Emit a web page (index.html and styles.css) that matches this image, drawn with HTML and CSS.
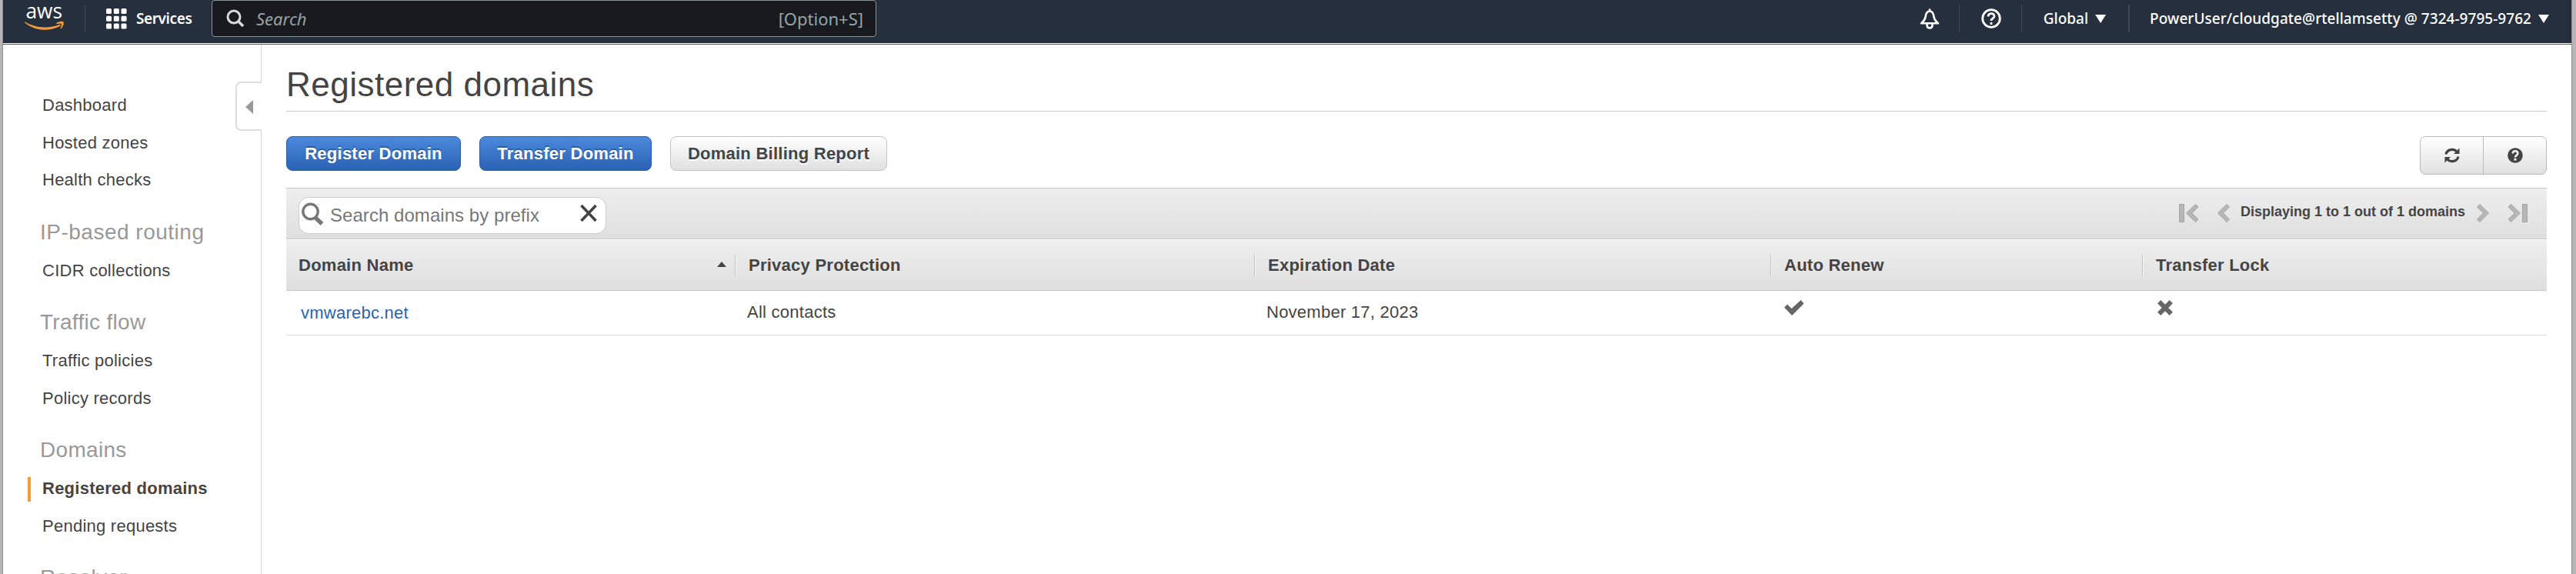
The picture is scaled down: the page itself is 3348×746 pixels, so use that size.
FILE: index.html
```html
<!DOCTYPE html>
<html lang="en">
<head>
<meta charset="utf-8">
<title>Registered domains</title>
<link rel="stylesheet" href="styles.css">
</head>
<body>
<div class="window">
  <header class="topbar">
    <svg class="logo" width="52" height="40" viewBox="0 -6 52 40" fill="#f29b38">
      <text class="logo-text" x="1.500" y="18" textLength="47.500" lengthAdjust="spacingAndGlyphs">aws</text>
      <path d="M.5 22.300C13 30.500 31 31.500 45.500 26C46.500 26 47 27 46 28C32 35.500 13 34.500 0 23.300Z"/>
      <path d="M40.500 24.500C44 21.300 49 21.300 50.500 22.600C51.500 25 49.500 30 46.600 32C46 31.500 48.500 27 47.800 25C46 24.300 42 25.500 40.500 24.500Z"/>
    </svg>
    <i class="sep sep-logo"></i>
    <button class="services">
      <svg width="27" height="27" viewBox="0 0 27 27" fill="#fff"><g id="r"><rect width="7" height="7" rx="1.500"/><rect x="9.800" width="7" height="7" rx="1.500"/><rect x="19.500" width="7" height="7" rx="1.500"/></g><use href="#r" y="9.800"/><use href="#r" y="19.500"/></svg>
      <span>Services</span>
    </button>
    <div class="search">
      <svg width="24" height="24" viewBox="0 0 24 24" fill="none" stroke="#d5dbdb" stroke-width="3"><circle cx="10" cy="10" r="8"/><path d="M15.500 15.500L22 22" stroke-width="3.600"/></svg>
      <span class="search-hint">Search</span>
      <span class="search-key">[Option+S]</span>
    </div>
    <nav class="tools">
      <svg class="bell" width="26" height="28" viewBox="0 0 26 28" fill="none" stroke="#fff" stroke-width="2.600" stroke-linejoin="round"><path d="M13 .5V4M13 3.500C9 3.500 8 7 7.500 11C7 15 5 16.500 2 19.300H24C21 16.500 19 15 18.500 11C18 7 17 3.500 13 3.500Z"/><path d="M9.500 20V22C9.500 26.500 16.500 26.500 16.500 22V20"/></svg>
      <i class="sep"></i>
      <svg class="help" width="26" height="26" viewBox="0 0 26 26" fill="none" stroke="#fff" stroke-width="2.800"><circle cx="13" cy="13" r="11.300"/><path d="M9 10.500C9 5.300 17 5.300 17 10C17 13 13 12.500 13 16"/><path d="M13 18V21"/></svg>
      <i class="sep"></i>
      <span class="region">Global</span><i class="caret"></i>
      <i class="sep sep-bold"></i>
      <span class="account">PowerUser/cloudgate@rtellamsetty @ 7324-9795-9762</span><i class="caret"></i>
    </nav>
  </header>

  <div class="body">
    <aside class="sidebar">
      <a>Dashboard</a>
      <a>Hosted zones</a>
      <a>Health checks</a>
      <h2 class="wide">IP-based routing</h2>
      <a>CIDR collections</a>
      <h2>Traffic flow</h2>
      <a>Traffic policies</a>
      <a>Policy records</a>
      <h2>Domains</h2>
      <a class="active">Registered domains</a>
      <a>Pending requests</a>
      <h2>Resolver</h2>
      <div class="handle"><i></i></div>
    </aside>

    <main class="main">
      <h1>Registered domains</h1>
      <div class="actions">
        <button class="btn primary b1">Register Domain</button>
        <button class="btn primary b2">Transfer Domain</button>
        <button class="btn b3">Domain Billing Report</button>
        <div class="group">
          <button><svg width="20" height="20" viewBox="0 0 20 20" fill="none" stroke="#444" stroke-width="3.200"><path d="M2 8.500A8 7.500 0 0 1 16 5"/><path d="M18 11.500A8 7.500 0 0 1 4 15"/><path d="M19.500 .5V8H12ZM.5 19.500V12H8Z" fill="#444" stroke="none"/></svg></button>
          <button><svg width="20" height="20" viewBox="0 0 20 20"><circle cx="10" cy="10" r="9.800" fill="#444"/><path d="M6.800 7.500C7 3 13.300 3.500 13.300 7.300C13.300 10 10 9.800 10 12.500" fill="none" stroke="#f2f2f2" stroke-width="2.600"/><path d="M8.500 13.800H11.500V16.600H8.500Z" fill="#f2f2f2"/></svg></button>
        </div>
      </div>
      <section class="table">
        <div class="toolbar">
          <div class="filter">
            <svg width="29" height="30" viewBox="0 0 29 30" fill="none" stroke="#777"><circle cx="11.500" cy="12" r="9.700" stroke-width="3.400"/><path d="M18 20L26.500 28" stroke-width="5.200"/></svg>
            <span>Search domains by prefix</span>
            <svg class="clear" width="22" height="22" viewBox="0 0 22 22" stroke="#444" stroke-width="3.600"><path d="M1.500 1L20.500 21M20.500 1L1.500 21"/></svg>
          </div>
          <div class="pager">
            <svg width="26" height="24" viewBox="0 0 26 24"><path d="M.5 .5H6.500V23.500H.5Z"/><path d="M21.500 .5L25 4L17 12L25 20L21.500 23.500L9.500 12Z"/></svg>
            <svg class="prev" width="16" height="24" viewBox="0 0 16 24"><path d="M12 .5L15.500 4L7.500 12L15.500 20L12 23.500L.5 12Z"/></svg>
            <span>Displaying 1 to 1 out of 1 domains</span>
            <svg class="next" width="16" height="24" viewBox="0 0 16 24"><path d="M4 .5L.5 4L8.500 12L.5 20L4 23.500L15.500 12Z"/></svg>
            <svg width="26" height="24" viewBox="0 0 26 24"><path d="M25.500 .5H19.500V23.500H25.500Z"/><path d="M4.500 .5L1 4L9 12L1 20L4.500 23.500L16.500 12Z"/></svg>
          </div>
        </div>
        <div class="grid head">
          <div class="sorted"><span>Domain Name</span><i class="up"></i></div>
          <div>Privacy Protection</div>
          <div>Expiration Date</div>
          <div>Auto Renew</div>
          <div>Transfer Lock</div>
        </div>
        <div class="grid row">
          <div><a>vmwarebc.net</a></div>
          <div>All contacts</div>
          <div>November 17, 2023</div>
          <div><svg class="check" width="26" height="20" viewBox="0 0 26 20"><path d="M0 9.500L4 5.500L9.500 11L21.500 0L25.500 4.500L10 20Z" fill="#666"/></svg></div>
          <div><svg class="cross" width="20" height="20" viewBox="0 0 20 20"><path d="M2.200 2.200L17.800 17.800M17.800 2.200L2.200 17.800" stroke="#666" stroke-width="6"/></svg></div>
        </div>
      </section>
    </main>
  </div>
</div>
</body>
</html>
```
FILE: styles.css
```css
* { box-sizing: border-box; }
body {
  margin: 0;
  height: 746px;
  overflow: hidden;
  background: #b7b4b8;
  color: #444;
  font-family: "Liberation Sans", Arial, sans-serif;
  font-size: 22px;
  letter-spacing: 0.25px;
}
button { font: inherit; letter-spacing: inherit; border: 0; margin: 0; padding: 0; background: none; color: inherit; }
svg { display: block; flex: none; }
h1, h2 { margin: 0; font-weight: 400; }

.window {
  width: 3340px;
  height: 746px;
  margin-left: 3px;
  border-left: 1px solid #8e8b8f;
  border-right: 1px solid #8e8e8e;
  background: #fff;
  overflow: hidden;
}

/* Top bar */
.topbar {
  display: flex;
  align-items: flex-start;
  height: 56px;
  background: #262f3e;
  color: #fff;
  font-family: "Noto Sans", sans-serif;
  letter-spacing: 0;
  white-space: nowrap;
}
.logo { margin-left: 28px; }
.logo-text { fill: #fff; font-size: 28px; font-weight: 500; font-family: "Open Sans", sans-serif; }
.sep { width: 1px; height: 36px; margin-top: 6px; background: #414954; flex: none; }
.sep-bold { width: 2px; }
.sep-logo { margin-left: 26px; }
.services { display: flex; margin: 11px 0 0 27px; gap: 12px; font-weight: 600; }
.services span { width: 72px; line-height: 27px; font-size: 19px; letter-spacing: -0.4px; }
.search {
  display: flex;
  align-items: center;
  width: 864px;
  height: 48px;
  margin-left: 26px;
  padding: 0 16px 0 18px;
  background: #191a1f;
  border: 1px solid #879596;
  border-radius: 4px;
  color: #95a5a6;
  font-size: 22px;
}
.search-hint { margin-left: 15px; font-style: italic; }
.search-key { margin-left: auto; }
.tools { display: flex; margin-left: auto; font-size: 19px; font-weight: 500; line-height: 48px; }
.bell { margin: 11px 25px 0 0; }
.help { margin: 11px 26px 0 28px; }
.region { margin-left: 28px; }
.caret {
  width: 14px;
  height: 11px;
  margin: 19px 29px 0 9px;
  background: #fff;
  clip-path: polygon(0 0, 100% 0, 50% 100%);
}
.account { margin-left: 26px; letter-spacing: 0.04px; }

/* Page body */
.body {
  display: grid;
  grid-template-columns: 336px 1fr;
  height: 689px;
  margin-top: 1px;
  border-top: 1px solid #555a64;
}
.sidebar { position: relative; border-right: 1px solid #d5d5d5; padding-top: 55px; }
.sidebar a { display: block; height: 48.6px; line-height: 48.6px; padding-left: 51px; white-space: nowrap; }
.sidebar h2 {
  height: 68.8px;
  padding: 27px 0 0 48px;
  font-size: 28px;
  line-height: 32px;
  letter-spacing: 0.3px;
  color: #999;
  white-space: nowrap;
}
.sidebar .wide { letter-spacing: 0.5px; }
.sidebar .active { font-weight: 700; }
.active::before {
  content: "";
  float: left;
  width: 4px;
  height: 32px;
  margin: 9px 0 0 -19px;
  background: #f09c3b;
}
.handle {
  position: absolute;
  top: 48px;
  right: -1px;
  width: 34px;
  height: 64px;
  padding: 22px 0 0 11px;
  background: #fff;
  border: 2px solid #ddd;
  border-right: 0;
  border-radius: 7px 0 0 7px;
}
.handle i { display: block; width: 10px; height: 18px; background: #999; clip-path: polygon(0 50%, 100% 0, 100% 100%); }

.main { padding: 0 32px; }
h1 {
  height: 87px;
  padding-top: 27px;
  font-size: 44px;
  line-height: 50px;
  letter-spacing: 0.5px;
  border-bottom: 1px solid #ccc;
}
.actions { display: flex; gap: 24px; align-items: flex-start; height: 99px; padding-top: 32px; }
.btn {
  height: 45px;
  border: 1px solid #c4c4c4;
  border-radius: 8px;
  background: linear-gradient(#fff, #e0e0e0);
  font-weight: 700;
  text-shadow: 0 2px 0 #fff;
  white-space: nowrap;
}
.primary { color: #fff; border-color: #2a5ca8; background: linear-gradient(#4b89dc, #2a62b4); text-shadow: 0 -2px 0 #2a5ca0; }
.b1 { width: 227px; }
.b2 { width: 224px; }
.b3 { width: 282px; }
.group {
  display: grid;
  grid-template-columns: 81px 1fr;
  width: 165px;
  height: 50px;
  margin-left: auto;
  border: 1px solid #bbb;
  border-radius: 7px;
  background: linear-gradient(#fff, #e0e0e0);
}
.group button { display: grid; place-items: center; }
.group button + button { border-left: 1px solid #bbb; }

.toolbar {
  display: flex;
  justify-content: space-between;
  height: 67px;
  padding: 11px 25px 0 16px;
  border-top: 1px solid #c6c6c6;
  border-bottom: 1px solid #c6c6c6;
  background: linear-gradient(#eee, #dfdfdf);
}
.filter {
  display: flex;
  width: 400px;
  height: 48px;
  padding: 6px 11px 0 3px;
  border: 1px solid #ccc;
  border-radius: 13px;
  background: #fff;
  color: #777;
  font-size: 24px;
  line-height: 34px;
  letter-spacing: 0.05px;
}
.filter span { margin-left: 8px; white-space: nowrap; }
.clear { margin: 3px 0 0 auto; }
.pager { display: flex; padding-top: 9px; font-size: 18px; font-weight: 700; line-height: 21px; letter-spacing: 0; white-space: nowrap; }
.pager path { fill: #b6b6b6; stroke: #a6a6a6; }
.prev { margin: 0 14px 0 24px; }
.next { margin: 0 24px 0 15px; }

.grid { display: grid; grid-template-columns: 583px 675px 671px 483px 526px; }
.head {
  height: 67px;
  padding-top: 19px;
  border-top: 1px solid #fff;
  border-bottom: 1px solid #c6c6c6;
  background: linear-gradient(#eee, #dfdfdf);
  font-weight: 700;
}
.head div { height: 28px; line-height: 28px; padding-left: 17px; border-left: 1px solid #c2c2c2; box-shadow: inset 1px 0 #f8f8f8; }
.head .sorted { display: flex; justify-content: space-between; padding: 0 11px 0 16px; border: 0; box-shadow: none; }
.up { width: 12px; height: 7px; margin-top: 9px; background: #444; clip-path: polygon(50% 0, 100% 100%, 0 100%); }
.row { height: 58px; padding-top: 14px; border-bottom: 1px solid #ddd; line-height: 28px; }
.row div { padding-left: 16px; }
.row div:first-child { padding-left: 19px; }
.row a { position: relative; top: 1px; color: #2862b5; }
.check { margin: -2px 0 0 2px; }
.cross { margin: -2px 0 0 4px; }
```
